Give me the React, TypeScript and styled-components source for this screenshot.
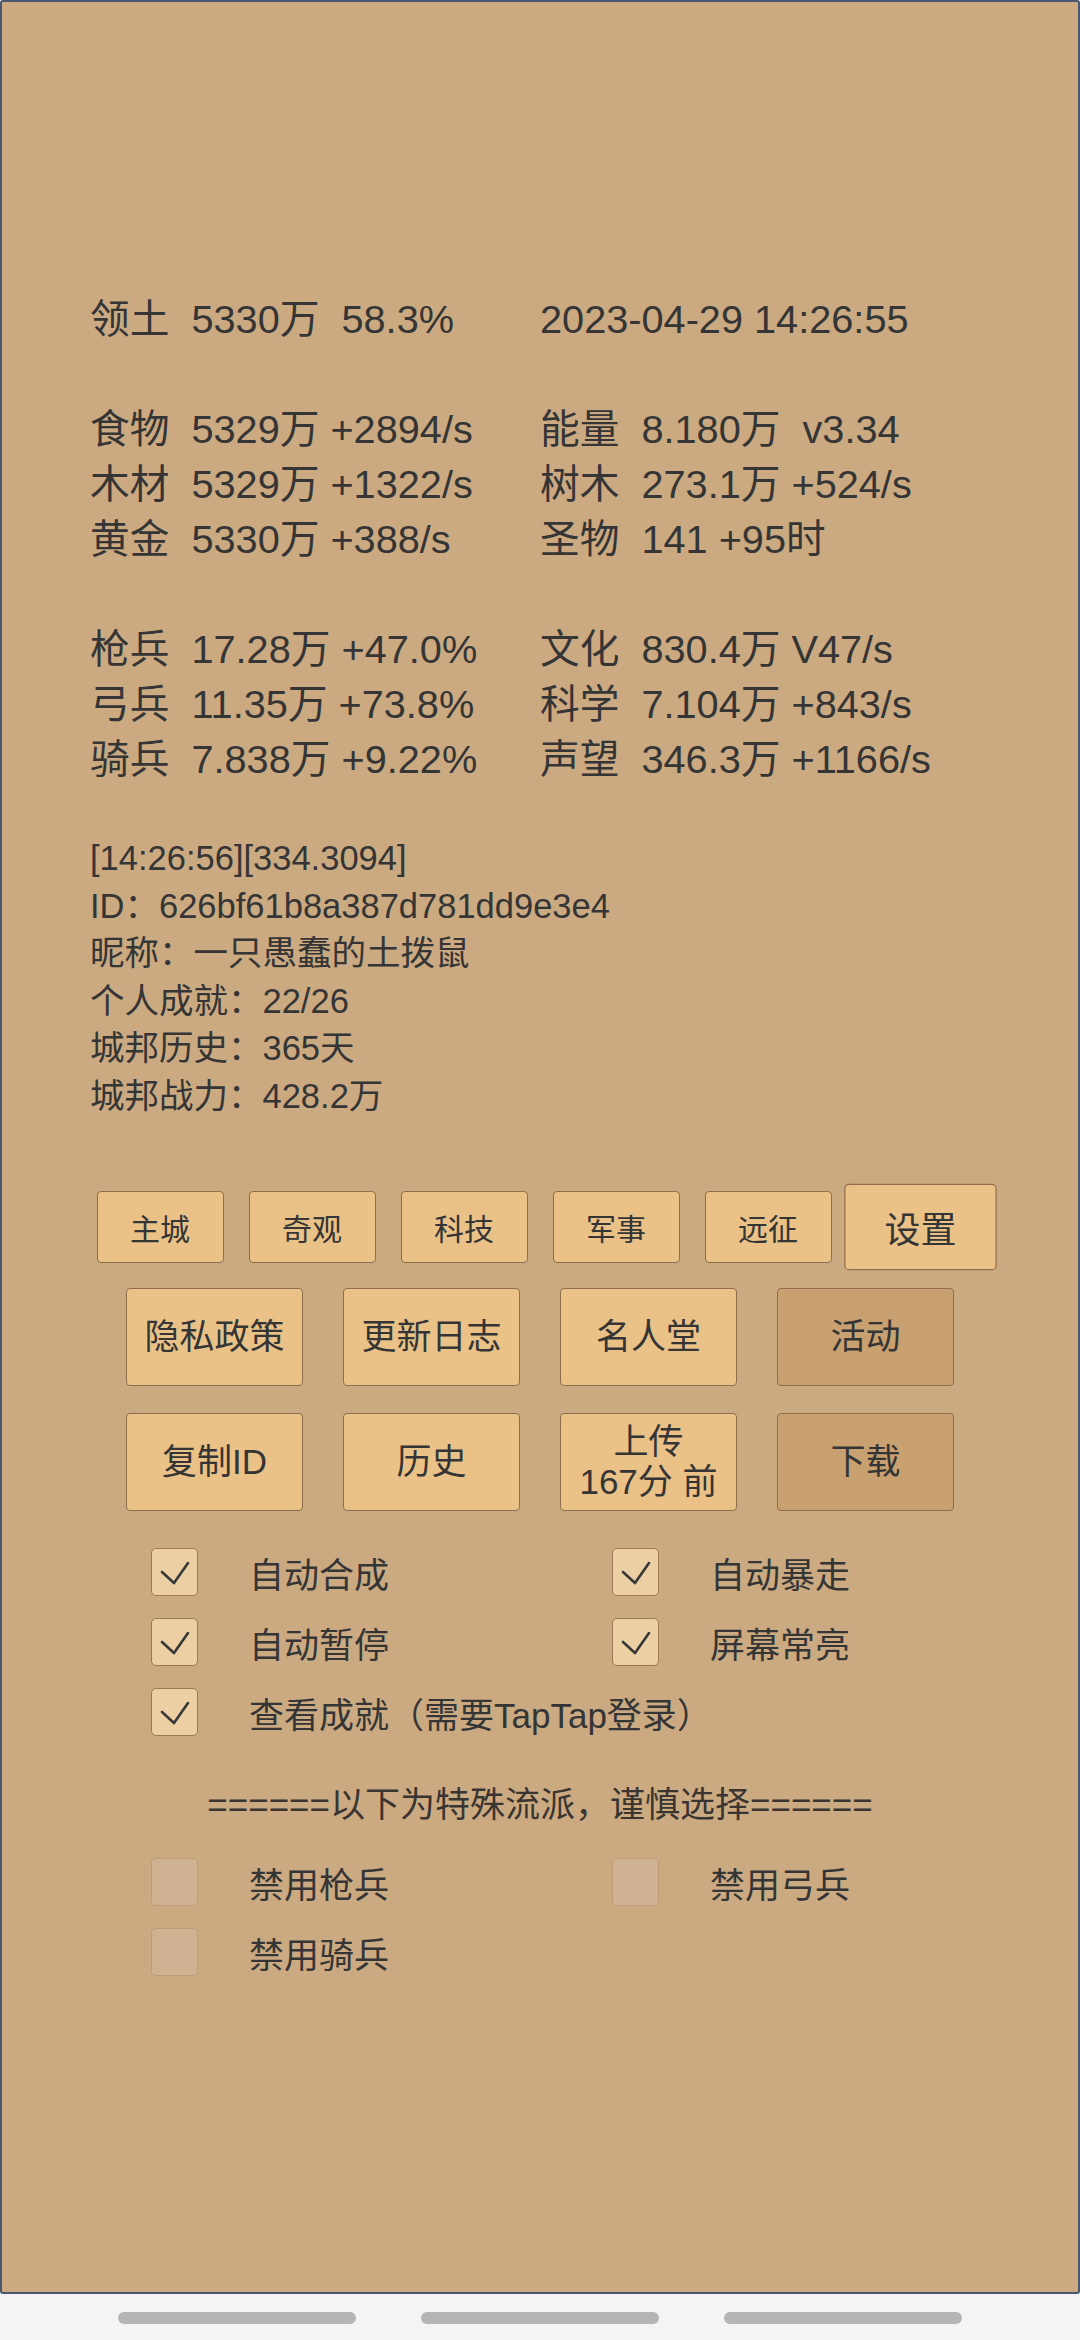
import React from "react";
import styled, { createGlobalStyle } from "styled-components";

const FONT = `"Liberation Sans", "Noto Sans CJK SC", sans-serif`;

const GlobalStyle = createGlobalStyle`
  html, body { margin: 0; padding: 0; background: #f4f4f4; }
  body {
    font-family: ${FONT};
    color: #353535;
  }
  * { box-sizing: border-box; }
`;

const Screen = styled.div`
  width: 1080px;
  height: 2340px;
  display: flex;
  flex-direction: column;
  background: #f4f4f4;
`;

const Frame = styled.main`
  flex: none;
  height: 2294px;
  background: #cbaa82;
  border: 2px solid #4a5570;
  border-radius: 3px;
  padding-top: 290px;
  display: flex;
  flex-direction: column;
`;

const Stats = styled.section`
  display: flex;
  flex-direction: column;
  gap: 55px;
  padding-left: 88px;
  font-size: 39.7px;
  line-height: 55px;
`;

const StatGroup = styled.div`
  display: grid;
  grid-template-columns: 450px auto;
`;

const StatLine = styled.div`
  white-space: pre;
  height: 55px;
`;

const Info = styled.section`
  margin-top: 48px;
  padding-left: 88px;
  font-size: 34.5px;
  line-height: 47.5px;
`;

const InfoLine = styled.div`
  white-space: pre;
`;

const TabRow = styled.nav`
  margin-top: 71px;
  display: flex;
  justify-content: center;
  align-items: center;
  gap: 25px;
`;

const TabButton = styled.button<{ $active?: boolean }>`
  width: 127px;
  height: 72px;
  padding: 0;
  background: #eac288;
  border: 1px solid #8f6f4b;
  border-radius: 4px;
  font-family: ${FONT};
  font-size: 30px;
  color: #353535;
  display: flex;
  align-items: center;
  justify-content: center;
  transform: ${(p) => (p.$active ? "scale(1.2)" : "none")};
`;

const ActionGrid = styled.section`
  margin-top: 25px;
  display: grid;
  grid-template-columns: repeat(4, 177px);
  grid-auto-rows: 98px;
  column-gap: 40px;
  row-gap: 27px;
  justify-content: center;
`;

const ActionButton = styled.button<{ $dim?: boolean }>`
  padding: 0;
  background: ${(p) => (p.$dim ? "#c9a070" : "#eac288")};
  border: 1px solid #8f6f4b;
  border-radius: 4px;
  font-family: ${FONT};
  font-size: 35px;
  line-height: 40px;
  color: #353535;
  display: flex;
  flex-direction: column;
  align-items: center;
  justify-content: center;
`;

const Options = styled.section<{ $top: number }>`
  margin-top: ${(p) => p.$top}px;
  padding-left: 149px;
  display: grid;
  grid-template-columns: 461px auto;
  grid-auto-rows: 48px;
  row-gap: 22px;
`;

const Option = styled.label<{ $wide?: boolean }>`
  display: flex;
  align-items: center;
  gap: 51px;
  font-size: 35px;
  white-space: pre;
  grid-column: ${(p) => (p.$wide ? "1 / span 2" : "auto")};
`;

const Box = styled.span<{ $checked?: boolean }>`
  flex: none;
  width: 47px;
  height: 48px;
  border-radius: 5px;
  background: ${(p) => (p.$checked ? "#eccfa2" : "#cfb292")};
  border: 1px solid ${(p) => (p.$checked ? "#9a7a55" : "#bc9d78")};
  display: flex;
`;

const Divider = styled.div`
  margin-top: 45px;
  text-align: center;
  font-size: 35px;
  line-height: 48px;
  color: #3a3530;
  white-space: pre;
`;

const NavBar = styled.footer`
  flex: 1;
  display: flex;
  justify-content: center;
  align-items: flex-start;
  padding-top: 18px;
  gap: 65px;
`;

const Pill = styled.span`
  width: 238px;
  height: 12px;
  border-radius: 6px;
  background: #b5b5b5;
`;

const Check = () => (
  <svg width="45" height="46" viewBox="0 0 45 46">
    <polyline
      points="10,23 22,34 36,14"
      fill="none"
      stroke="#383838"
      strokeWidth="2.6"
      strokeLinecap="round"
      strokeLinejoin="round"
    />
  </svg>
);

const CheckBox = ({ checked, label, wide }: { checked?: boolean; label: string; wide?: boolean }) => (
  <Option $wide={wide}>
    <Box $checked={checked}>{checked && <Check />}</Box>
    {label}
  </Option>
);

export default function App() {
  return (
    <Screen>
      <GlobalStyle />
      <Frame>
        <Stats>
          <StatGroup>
            <StatLine>领土  5330万  58.3%</StatLine>
            <StatLine>2023-04-29 14:26:55</StatLine>
          </StatGroup>
          <StatGroup>
            <StatLine>食物  5329万 +2894/s</StatLine>
            <StatLine>能量  8.180万  v3.34</StatLine>
            <StatLine>木材  5329万 +1322/s</StatLine>
            <StatLine>树木  273.1万 +524/s</StatLine>
            <StatLine>黄金  5330万 +388/s</StatLine>
            <StatLine>圣物  141 +95时</StatLine>
          </StatGroup>
          <StatGroup>
            <StatLine>枪兵  17.28万 +47.0%</StatLine>
            <StatLine>文化  830.4万 V47/s</StatLine>
            <StatLine>弓兵  11.35万 +73.8%</StatLine>
            <StatLine>科学  7.104万 +843/s</StatLine>
            <StatLine>骑兵  7.838万 +9.22%</StatLine>
            <StatLine>声望  346.3万 +1166/s</StatLine>
          </StatGroup>
        </Stats>

        <Info>
          <InfoLine>[14:26:56][334.3094]</InfoLine>
          <InfoLine>ID：626bf61b8a387d781dd9e3e4</InfoLine>
          <InfoLine>昵称：一只愚蠢的土拨鼠</InfoLine>
          <InfoLine>个人成就：22/26</InfoLine>
          <InfoLine>城邦历史：365天</InfoLine>
          <InfoLine>城邦战力：428.2万</InfoLine>
        </Info>

        <TabRow>
          <TabButton>主城</TabButton>
          <TabButton>奇观</TabButton>
          <TabButton>科技</TabButton>
          <TabButton>军事</TabButton>
          <TabButton>远征</TabButton>
          <TabButton $active>设置</TabButton>
        </TabRow>

        <ActionGrid>
          <ActionButton>隐私政策</ActionButton>
          <ActionButton>更新日志</ActionButton>
          <ActionButton>名人堂</ActionButton>
          <ActionButton $dim>活动</ActionButton>
          <ActionButton>复制ID</ActionButton>
          <ActionButton>历史</ActionButton>
          <ActionButton>
            <span>上传</span>
            <span>167分 前</span>
          </ActionButton>
          <ActionButton $dim>下载</ActionButton>
        </ActionGrid>

        <Options $top={37}>
          <CheckBox checked label="自动合成" />
          <CheckBox checked label="自动暴走" />
          <CheckBox checked label="自动暂停" />
          <CheckBox checked label="屏幕常亮" />
          <CheckBox checked wide label="查看成就（需要TapTap登录）" />
        </Options>

        <Divider>======以下为特殊流派，谨慎选择======</Divider>

        <Options $top={29}>
          <CheckBox label="禁用枪兵" />
          <CheckBox label="禁用弓兵" />
          <CheckBox label="禁用骑兵" />
        </Options>
      </Frame>
      <NavBar>
        <Pill />
        <Pill />
        <Pill />
      </NavBar>
    </Screen>
  );
}
